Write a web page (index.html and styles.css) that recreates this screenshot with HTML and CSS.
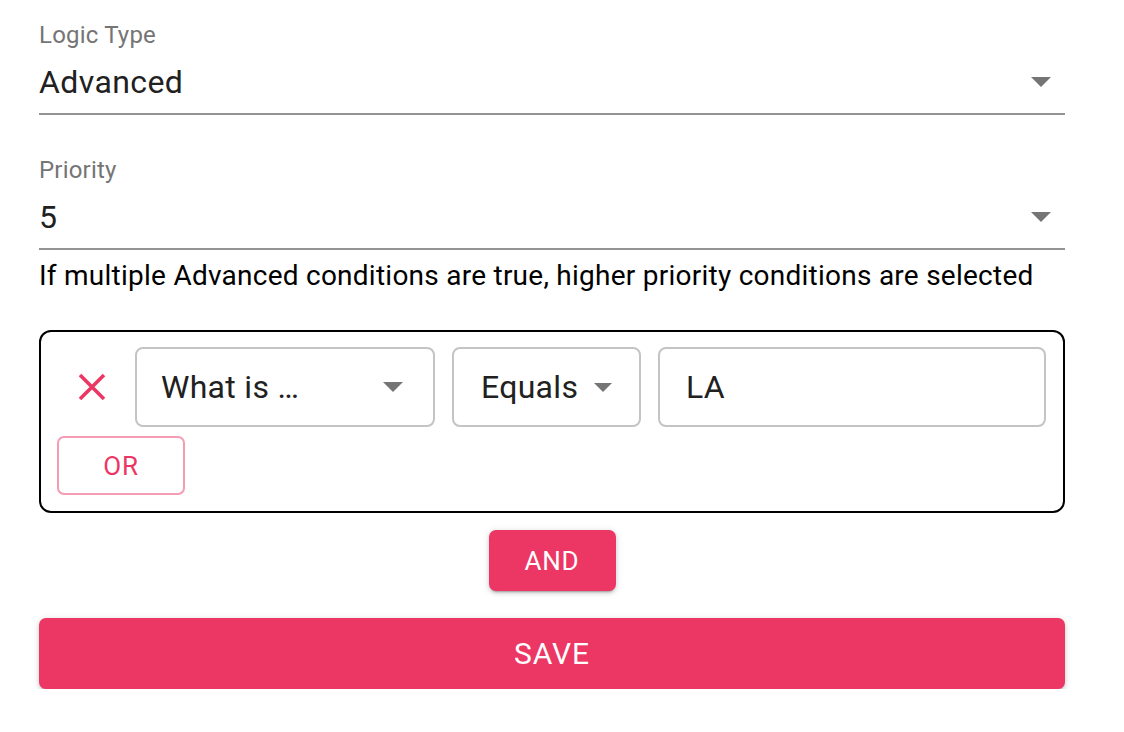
FILE: index.html
```html
<!DOCTYPE html>
<html>
<head>
<meta charset="utf-8">
<link rel="stylesheet" href="styles.css">
</head>
<body>
<div class="page">
  <div class="field field-first">
    <div class="label">Logic Type</div>
    <div class="value-row">
      <span class="value">Advanced</span>
      <svg class="arrow" width="20" height="10" viewBox="0 0 20 10"><polygon points="0,0 20,0 10,10" fill="#757575"/></svg>
    </div>
  </div>
  <div class="field">
    <div class="label">Priority</div>
    <div class="value-row">
      <span class="value">5</span>
      <svg class="arrow" width="20" height="10" viewBox="0 0 20 10"><polygon points="0,0 20,0 10,10" fill="#757575"/></svg>
    </div>
  </div>
  <div class="helper">If multiple Advanced conditions are true, higher priority conditions are selected</div>

  <div class="group">
    <div class="cond-row">
      <div class="remove">
        <svg width="28" height="28" viewBox="0 0 28 28"><path d="M2 2 L26 26 M26 2 L2 26" stroke="#ec3664" stroke-width="3.6" stroke-linecap="butt"/></svg>
      </div>
      <div class="box select-what">
        <span class="box-text">What is …</span>
        <svg class="arrow" width="20" height="10" viewBox="0 0 20 10"><polygon points="0,0 20,0 10,10" fill="#757575"/></svg>
      </div>
      <div class="box select-op">
        <span class="box-text">Equals</span>
        <svg class="arrow" width="18" height="9" viewBox="0 0 20 10"><polygon points="0,0 20,0 10,10" fill="#757575"/></svg>
      </div>
      <div class="box input-val">
        <span class="box-text">LA</span>
      </div>
    </div>
    <button class="btn-or">OR</button>
  </div>

  <div class="and-wrap">
    <button class="btn-and">AND</button>
  </div>
  <button class="btn-save">SAVE</button>
</div>
</body>
</html>
```

FILE: styles.css
```css
html, body {
  margin: 0;
  padding: 0;
  background: #ffffff;
}
body {
  font-family: Roboto, "Liberation Sans", Arial, sans-serif;
  color: rgba(0, 0, 0, 0.87);
}
.page {
  width: 1026px;
  padding: 20px 0 0 39px;
  display: flex;
  flex-direction: column;
}
.field {
  display: flex;
  flex-direction: column;
  border-bottom: 2px solid #949494;
  margin-top: 40px;
}
.field-first {
  margin-top: 0;
}
.label {
  font-size: 24px;
  line-height: 30px;
  color: #757575;
  letter-spacing: 0.2px;
}
.value-row {
  display: flex;
  align-items: center;
  justify-content: space-between;
  height: 40px;
  margin-top: 12px;
  margin-bottom: 11px;
  padding-right: 14px;
}
.value {
  font-size: 32px;
  color: #212121;
  letter-spacing: 0.4px;
}
.helper {
  margin-top: 11px;
  font-size: 28px;
  line-height: 30px;
  color: #000;
  letter-spacing: 0.25px;
}
.group {
  margin-top: 39px;
  border: 2px solid #000;
  border-radius: 12px;
  padding: 15px 17px 16px 16px;
  display: flex;
  flex-direction: column;
  align-items: flex-start;
}
.cond-row {
  display: flex;
  align-items: center;
  width: 100%;
}
.remove {
  width: 78px;
  display: flex;
  align-items: center;
  padding-left: 21px;
  box-sizing: border-box;
  height: 80px;
}
.remove svg {
  display: block;
}
.box {
  height: 80px;
  box-sizing: border-box;
  border: 2px solid #c4c4c4;
  border-radius: 8px;
  display: flex;
  align-items: center;
}
.box-text {
  font-size: 32px;
  color: #212121;
  letter-spacing: 0.3px;
}
.select-what {
  width: 300px;
  padding: 0 30px 0 24px;
  justify-content: space-between;
}
.select-op {
  width: 189px;
  margin-left: 17px;
  padding: 0 27px 0 27px;
  justify-content: space-between;
}
.input-val {
  flex: 1;
  margin-left: 17px;
  padding-left: 26px;
}
.btn-or {
  margin-top: 9px;
  width: 128px;
  height: 59px;
  background: #fff;
  border: 2px solid #f59bb3;
  border-radius: 7px;
  color: #ec3664;
  font-family: Roboto, "Liberation Sans", Arial, sans-serif;
  font-size: 26px;
  letter-spacing: 0.8px;
  padding: 0;
}
.and-wrap {
  display: flex;
  justify-content: center;
  margin-top: 17px;
}
.btn-and {
  width: 127px;
  height: 61px;
  background: #ec3664;
  border: none;
  border-radius: 7px;
  color: #fff;
  font-family: Roboto, "Liberation Sans", Arial, sans-serif;
  font-size: 26px;
  letter-spacing: 0.8px;
  padding: 0;
  box-shadow: 0 3px 2px -2px rgba(0,0,0,0.25), 0 2px 4px rgba(0,0,0,0.14), 0 1px 8px rgba(0,0,0,0.1);
}
.btn-save {
  margin-top: 27px;
  width: 1026px;
  height: 71px;
  background: #ec3664;
  border: none;
  border-radius: 7px;
  color: #fff;
  font-family: Roboto, "Liberation Sans", Arial, sans-serif;
  font-size: 30px;
  letter-spacing: 0.9px;
  padding: 0;
  box-shadow: 0 3px 2px -2px rgba(0,0,0,0.25), 0 2px 4px rgba(0,0,0,0.14), 0 1px 8px rgba(0,0,0,0.1);
}
```
